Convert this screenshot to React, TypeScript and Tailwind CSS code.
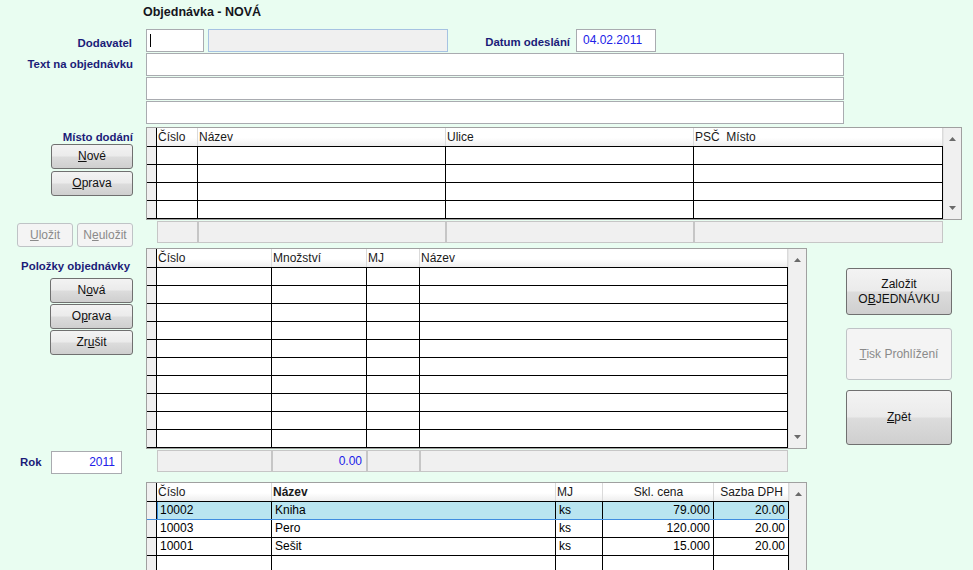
import type { ReactNode } from 'react'
import clsx from 'clsx'

type Col = {
  w: string
  title: string
  bold?: boolean
  center?: boolean
  right?: boolean
}

const LABEL = 'text-[11.4px] font-bold text-[#1b1b78]'
const INPUT = 'h-[23px] border border-[#a9abb0] bg-white'

function Btn({
  children,
  className,
  disabled,
}: {
  children: ReactNode
  className?: string
  disabled?: boolean
}) {
  return (
    <div
      className={clsx(
        'flex flex-col items-center justify-center rounded-[3px] border text-center text-[12px] leading-[15px]',
        disabled
          ? 'border-[#bfc3c6] bg-[#f4f4f4] text-[#8a8a8a]'
          : 'border-[#707070] bg-[linear-gradient(to_bottom,#f3f3f3_0%,#ebebeb_48%,#dcdcdc_52%,#cfcfcf_100%)] text-[#111]',
        className,
      )}
    >
      {children}
    </div>
  )
}

function Arrow({ up }: { up?: boolean }) {
  return (
    <svg width="7" height="4" viewBox="0 0 7 4">
      <path d={up ? 'M0 4 L3.5 0 L7 4 Z' : 'M0 0 L3.5 4 L7 0 Z'} fill="#6a6a6a" />
    </svg>
  )
}

function Grid({
  cols,
  rows,
  count,
  scroll,
  selected,
}: {
  cols: Col[]
  rows: string[][]
  count: number
  scroll: string
  selected?: number
}) {
  return (
    <div className="flex border border-[#a0a0a0] bg-white">
      <div className="flex flex-col">
        <div className="flex h-[19px] border-b border-black bg-[linear-gradient(to_bottom,#ffffff_0%,#ffffff_55%,#eeeeee_100%)]">
          <div className="w-[10px] shrink-0 border-r border-black bg-[#f0f0f0]" />
          {cols.map((c, i) => (
            <div
              key={i}
              className={clsx(
                c.w,
                'shrink-0 overflow-hidden whitespace-pre border-r border-[#dadada] pl-[1px] leading-[18px] text-[#1a1a1a]',
                c.bold && 'font-bold',
                c.center && 'text-center',
              )}
            >
              {c.title}
            </div>
          ))}
        </div>
        {Array.from({ length: count }).map((_, r) => {
          const sel = r === selected
          return (
            <div
              key={r}
              className={clsx('flex h-[18px] border-b', sel ? 'border-[#3f8de0]' : 'border-black')}
            >
              <div className="w-[10px] shrink-0 border-r border-black bg-[#f0f0f0]" />
              {cols.map((c, i) => (
                <div
                  key={i}
                  className={clsx(
                    c.w,
                    'shrink-0 overflow-hidden whitespace-nowrap border-r border-black px-[3px] leading-[17px] text-black',
                    c.right && 'text-right',
                    sel && 'bg-[#b9e5f0]',
                    sel && i === 0 && 'shadow-[inset_1px_0_0_#3f8de0]',
                  )}
                >
                  {rows[r]?.[i] ?? ''}
                </div>
              ))}
            </div>
          )
        })}
      </div>
      <div
        className={clsx(
          scroll,
          'flex shrink-0 flex-col items-center justify-between border-l border-[#e6e6e6] bg-[#f0f0f0] py-[9px]',
        )}
      >
        <Arrow up />
        <Arrow />
      </div>
    </div>
  )
}

function Footer({ cols, values }: { cols: string[]; values?: string[] }) {
  return (
    <div className="ml-[11px] mt-[1px] flex">
      {cols.map((w, i) => (
        <div
          key={i}
          className={clsx(
            w,
            'h-[22px] shrink-0 border border-[#c6c6c6] bg-[#f0f0f0] pr-[4px] text-right leading-[20px] text-[#2020e8]',
          )}
        >
          {values?.[i] ?? ''}
        </div>
      ))}
    </div>
  )
}

const placeCols: Col[] = [
  { w: 'w-[41px]', title: 'Číslo' },
  { w: 'w-[248px]', title: 'Název' },
  { w: 'w-[248px]', title: 'Ulice' },
  { w: 'w-[249px]', title: 'PSČ  Místo' },
]

const itemCols: Col[] = [
  { w: 'w-[115px]', title: 'Číslo' },
  { w: 'w-[95px]', title: 'Množství' },
  { w: 'w-[53px]', title: 'MJ' },
  { w: 'w-[368px]', title: 'Název' },
]

const goodsCols: Col[] = [
  { w: 'w-[115px]', title: 'Číslo' },
  { w: 'w-[284px]', title: 'Název', bold: true },
  { w: 'w-[47px]', title: 'MJ' },
  { w: 'w-[111px]', title: 'Skl. cena', center: true, right: true },
  { w: 'w-[75px]', title: 'Sazba DPH', center: true, right: true },
]

const goods = [
  ['10002', 'Kniha', 'ks', '79.000', '20.00'],
  ['10003', 'Pero', 'ks', '120.000', '20.00'],
  ['10001', 'Sešit', 'ks', '15.000', '20.00'],
]

export default function App() {
  return (
    <div className="h-[570px] w-[973px] overflow-hidden bg-[#e9fdf1] font-['Liberation_Sans',Arial,sans-serif] text-[12px]">
      <div className="h-[29px] pl-[143px] pt-[3px] text-[12.5px] font-bold text-[#151520]">
        Objednávka - NOVÁ
      </div>

      <div className="flex h-[24px]">
        <div className={clsx(LABEL, 'w-[146px] shrink-0 pr-[14px] pt-[6px] text-right')}>Dodavatel</div>
        <div className={clsx(INPUT, 'relative w-[58px]')}>
          <div className="absolute left-[3px] top-[4px] h-[13px] w-[1px] bg-black" />
        </div>
        <div className="ml-[4px] h-[23px] w-[240px] border border-[#a6c2e2] bg-[#f0f0f0]" />
        <div className={clsx(LABEL, 'w-[128px] shrink-0 pr-[6px] pt-[5px] text-right')}>Datum odeslání</div>
        <div className={clsx(INPUT, 'w-[80px] px-[6px] leading-[21px] text-[#2020e8]')}>04.02.2011</div>
      </div>

      <div className="flex">
        <div className={clsx(LABEL, 'w-[146px] shrink-0 pr-[13px] pt-[3px] text-right')}>
          Text na objednávku
        </div>
        <div className="flex flex-col gap-[1px]">
          <div className={clsx(INPUT, 'w-[698px]')} />
          <div className={clsx(INPUT, 'w-[698px]')} />
          <div className={clsx(INPUT, 'w-[698px]')} />
        </div>
      </div>

      <div className="mt-[3px] flex">
        <div className="flex w-[146px] shrink-0 flex-col">
          <div className={clsx(LABEL, 'h-[17px] pr-[13px] pt-[2px] text-right')}>Místo dodání</div>
          <Btn className="ml-[51px] h-[25px] w-[82px]">
            <span>
              <u>N</u>ové
            </span>
          </Btn>
          <Btn className="ml-[51px] mt-[2px] h-[25px] w-[82px]">
            <span>
              <u>O</u>prava
            </span>
          </Btn>
          <div className="ml-[17px] mt-[27px] flex gap-[4px]">
            <Btn disabled className="h-[24px] w-[56px]">
              <span>
                <u>U</u>ložit
              </span>
            </Btn>
            <Btn disabled className="h-[24px] w-[56px]">
              <span>
                N<u>e</u>uložit
              </span>
            </Btn>
          </div>
        </div>
        <div className="flex flex-col">
          <Grid cols={placeCols} rows={[]} count={4} scroll="w-[18px]" />
          <Footer cols={['w-[41px]', 'w-[248px]', 'w-[248px]', 'w-[249px]']} />
        </div>
      </div>

      <div className="mt-[1px] flex">
        <div className="flex w-[146px] shrink-0 flex-col">
          <div className={clsx(LABEL, 'h-[30px] pr-[16px] pt-[10px] text-right')}>Položky objednávky</div>
          <div className="ml-[50px] flex flex-col gap-[1px]">
            <Btn className="h-[25px] w-[83px]">
              <span>
                N<u>o</u>vá
              </span>
            </Btn>
            <Btn className="h-[25px] w-[83px]">
              <span>
                O<u>p</u>rava
              </span>
            </Btn>
            <Btn className="h-[25px] w-[83px]">
              <span>
                Zr<u>u</u>šit
              </span>
            </Btn>
          </div>
          <div className="mb-[-2px] mt-auto flex items-center">
            <div className={clsx(LABEL, 'w-[51px] pl-[20px]')}>Rok</div>
            <div className={clsx(INPUT, 'w-[71px] pr-[6px] text-right leading-[21px] text-[#2020e8]')}>2011</div>
          </div>
        </div>
        <div className="flex flex-col">
          <Grid cols={itemCols} rows={[]} count={10} scroll="w-[18px]" />
          <Footer cols={['w-[115px]', 'w-[95px]', 'w-[53px]', 'w-[368px]']} values={['', '0.00', '', '']} />
        </div>
        <div className="ml-[39px] flex flex-col pt-[20px]">
          <Btn className="h-[47px] w-[106px]">
            <span>Založit</span>
            <span>
              O<u>B</u>JEDNÁVKU
            </span>
          </Btn>
          <Btn disabled className="mt-[13px] h-[52px] w-[106px]">
            <span>
              <u>T</u>isk Prohlížení
            </span>
          </Btn>
          <Btn className="mt-[10px] h-[55px] w-[106px]">
            <span>
              <u>Z</u>pět
            </span>
          </Btn>
        </div>
      </div>

      <div className="ml-[146px] mt-[10px] flex">
        <Grid cols={goodsCols} rows={goods} count={5} scroll="w-[17px]" selected={0} />
      </div>
    </div>
  )
}
